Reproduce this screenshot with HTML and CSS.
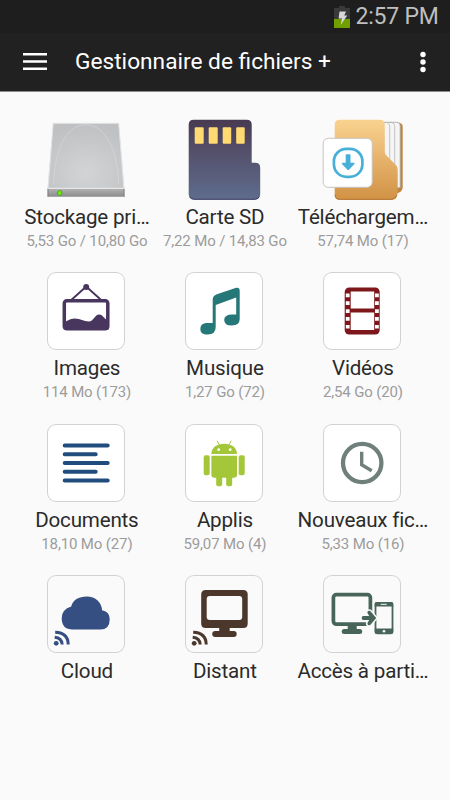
FILE: index.html
```html
<!DOCTYPE html>
<html lang="fr">
<head>
<meta charset="utf-8">
<title>Gestionnaire de fichiers +</title>
<link rel="stylesheet" href="styles.css">
</head>
<body>
<div class="status">
  <svg class="battery" width="16" height="22" viewBox="334 6 16 22"><path fill="#393939" d="M334 8h5V6h6v2h5v11h-16z"/><path fill="#719f00" d="M334 19h16v9h-16z"/><path fill="#d8d8d8" d="M339.500 11.500h6.500l-1.700 4h2.900l-6.500 9.500 1.300-6.500h-3.400z"/></svg>
  <span class="clock">2:57 PM</span>
</div>
<header class="bar">
  <svg class="menu" width="24" height="17" viewBox="0 0 24 17"><path fill="#fff" d="M0 0h24v2.500H0zM0 7.200h24v2.500H0zM0 14.400h24v2.500H0z"/></svg>
  <h1 class="heading">Gestionnaire de fichiers +</h1>
  <svg class="more" width="6" height="22" viewBox="0 0 6 22"><g fill="#fff"><circle cx="3" cy="3.500" r="2.700"/><circle cx="3" cy="11" r="2.700"/><circle cx="3" cy="18.500" r="2.700"/></g></svg>
</header>
<main class="grid">
  <section class="tile">
    <svg class="icon" viewBox="47.300 121.200 78 78">
      <defs><radialGradient id="disk" cx=".5" cy=".75" r=".75"><stop offset="0" stop-color="#d2d4d5"/><stop offset="1" stop-color="#bec0c2"/></radialGradient><linearGradient id="edge" x2="0" y2="1"><stop offset="0" stop-color="#b4b4b4"/><stop offset="1" stop-color="#8b8b8b"/></linearGradient></defs>
      <path fill="url(#disk)" d="M53.500 123.500h65.500l5.500 65H48z"/>
      <path fill="none" stroke="#e4e4e4" d="M48.300 188.500L53.500 123.500h65.500l5.200 65"/>
      <path fill="none" stroke="#d6d7d8" stroke-width=".7" d="M54 184C55 149 67 125 86 125s32 24 33 59"/>
      <path fill="url(#edge)" d="M48 188.500h76.700v8.500H48z"/><path fill="#e6e6e6" d="M48 188h76.700v1.200H48z"/><path stroke="#818181" d="M48.300 189v8M124.300 189v8"/><circle cx="60" cy="193.200" r="2.400" fill="#6bea16" stroke="#4b9d1a" stroke-width=".8"/>
    </svg>
    <h2 class="name">Stockage pri…</h2><p class="info">5,53 Go / 10,80 Go</p>
  </section>
  <section class="tile">
    <svg class="icon" viewBox="185.300 121.200 78 78">
      <defs><linearGradient id="sd" x2="0" y2="1"><stop offset="0" stop-color="#483a51"/><stop offset=".4" stop-color="#54506b"/><stop offset="1" stop-color="#5e6c8c"/></linearGradient></defs>
      <path fill="url(#sd)" d="M194 120h53q5 0 5 5v38h3.500q5 0 5 5v26q0 5.500-5 5.500H194q-5 0-5-5.500v-69q0-5 5-5z"/>
      <path fill="none" stroke="#32345a" d="M190 197q1.500 2.500 4 2.500h61.500q2.500 0 4-2.500"/>
      <g fill="#ffda72"><rect x="195" y="127.500" width="9" height="16.500" rx="1"/><rect x="209" y="127.500" width="9" height="16.500" rx="1"/><rect x="223" y="127.500" width="8.500" height="16.500" rx="1"/><rect x="236.500" y="127.500" width="8.500" height="16.500" rx="1"/></g>
    </svg>
    <h2 class="name">Carte SD</h2><p class="info">7,22 Mo / 14,83 Go</p>
  </section>
  <section class="tile">
    <svg class="icon" viewBox="323.300 121.200 78 78">
      <defs><linearGradient id="folder" x2="0" y2="1"><stop offset="0" stop-color="#fad290"/><stop offset="1" stop-color="#d19245"/></linearGradient></defs>
      <path fill="#c0843c" d="M388 123h12q3 1 3 4v60q0 4-4 6l-7 2z"/>
      <path fill="#f5f5f5" stroke="#a8a8a8" stroke-width=".8" d="M384 122.500h13q3.500 0 3.500 3.500v62h-16z"/>
      <path fill="none" stroke="#b4b4b4" stroke-width=".8" d="M385 122.500q5 0 5 4v33M390 122.500q5 0 5 4v38"/>
      <path fill="url(#folder)" d="M340 120h40q5 0 5 5v27q0 2 2 4l9 9q2 2 2 5v22q0 8-6 8h-52q-5 0-5-5v-70q0-5 5-5z"/>
      <path fill="none" stroke="#b5742d" d="M335.500 195q0 4.500 4.500 4.500h52q4 0 5-4"/>
      <rect x="323.500" y="138.500" width="49" height="49" rx="5" fill="#fff" stroke="#c8c4bd"/>
      <rect x="334.200" y="149" width="28.500" height="28" rx="12.500" fill="none" stroke="#46b0d8" stroke-width="2.700"/>
      <path fill="#46b0d8" d="M346 155.500q0-1 1-1h2.800q1 0 1 1v7.500h3.700q1 .5 0 1.500l-5 5.200q-1 1-2 0l-5-5.200q-1-1 0-1.500h3.500z"/>
    </svg>
    <h2 class="name">Téléchargem…</h2><p class="info">57,74 Mo (17)</p>
  </section>
  <section class="tile">
    <svg class="icon card" viewBox="47.300 272.500 78 78">
      <path fill="none" stroke="#49365e" stroke-width="2" d="M71 301l15.500-14L102 301"/><circle cx="86.500" cy="287.500" r="3" fill="#49365e"/>
      <rect x="64.600" y="301.200" width="43.500" height="28" rx="2.500" fill="none" stroke="#49365e" stroke-width="3.500"/>
      <path fill="#49365e" d="M64 323c3-1 6-4 11-4 6 0 9 3 14 3s6-7 10.500-7c4 0 5 5 9.500 6v9H64z"/>
    </svg>
    <h2 class="name">Images</h2><p class="info">114 Mo (173)</p>
  </section>
  <section class="tile">
    <svg class="icon card" viewBox="185.300 272.500 78 78">
      <path fill="#267878" d="M213 323.500V300q0-3.500 3.500-5l20-6.700q3.500-.5 3.500 3V319.500q0 6.500-8 6.500-7.500 0-7.500-5.500t8-5.500h4V298l-20.500 7.500V327.500q0 7.500-8 7.500c-5 0-7.300-1.500-7.300-5.500 0-4.500 3-6 7.500-6z"/>
    </svg>
    <h2 class="name">Musique</h2><p class="info">1,27 Go (72)</p>
  </section>
  <section class="tile">
    <svg class="icon card" viewBox="323.300 272.500 78 78">
      <rect x="345" y="288" width="35" height="47" rx="4.500" fill="#7d171b"/>
      <path fill="#fff" d="M351 292h23.500v17H351zM351 313h23.500v17.500H351z"/>
      <path stroke="#fff" stroke-width="3.800" stroke-dasharray="3.700 4.150" d="M348 294v38M377.200 294v38"/>
    </svg>
    <h2 class="name">Vidéos</h2><p class="info">2,54 Go (20)</p>
  </section>
  <section class="tile">
    <svg class="icon card" viewBox="47.300 423.800 78 78"><path stroke="#204d7e" stroke-width="4" stroke-linecap="round" d="M65 445.200h43M65 454h31M65 462.800h43M65 471.500h31M65 480.200h43"/></svg>
    <h2 class="name">Documents</h2><p class="info">18,10 Mo (27)</p>
  </section>
  <section class="tile">
    <svg class="icon card" viewBox="185.300 423.800 78 78">
      <g fill="#a4c639"><path d="M211.700 453.700c0-6 5-10.200 12.800-10.200s12.800 4.200 12.800 10.200zM211.700 455.500h25.600v19q0 3-3 3h-19.600q-3 0-3-3z"/><rect x="204" y="455" width="6" height="20" rx="2"/><rect x="239" y="455" width="6" height="20" rx="2"/><rect x="216.500" y="473" width="6" height="13" rx="2"/><rect x="226.500" y="473" width="6" height="13" rx="2"/></g>
      <path stroke="#a4c639" stroke-width="1" d="M217.500 440.500l2 4M231.500 440.500l-2 4"/><circle cx="219" cy="449.500" r="1.400" fill="#fff"/><circle cx="230.500" cy="449.500" r="1.400" fill="#fff"/>
    </svg>
    <h2 class="name">Applis</h2><p class="info">59,07 Mo (4)</p>
  </section>
  <section class="tile">
    <svg class="icon card" viewBox="323.300 423.800 78 78"><circle cx="362.500" cy="462.800" r="19.200" fill="none" stroke="#6f807c" stroke-width="4.300"/><path fill="none" stroke="#6f807c" stroke-width="3.400" d="M362 451.500v13l10 6"/></svg>
    <h2 class="name">Nouveaux fic…</h2><p class="info">5,33 Mo (16)</p>
  </section>
  <section class="tile">
    <svg class="icon card clear" viewBox="47.300 575 78 78">
      <path fill="#364f82" d="M73 629.500q-11 0-11-11.500 0-8.500 9.500-11.500C73 600 79 596.500 87 596.500c9 0 15 6 15.500 14 5 .5 7.500 4 7.500 9q0 10-9.500 10z"/>
      <circle cx="56.500" cy="643.300" r="2.400" fill="#364f82"/><path fill="none" stroke="#364f82" stroke-width="3" d="M55 637.300q7 .5 7.500 7.200M55.500 632.200q13 .5 13 12.300"/>
    </svg>
    <h2 class="name">Cloud</h2>
  </section>
  <section class="tile">
    <svg class="icon card clear" viewBox="185.300 575 78 78">
      <path fill="#4b372b" fill-rule="evenodd" d="M206 590h37.500q4.500 0 4.500 4.500v29q0 4.500-4.500 4.500h-13.500v3h4q3 0 3 3t-3 3h-18.500q-3 0-3-3t3-3h4v-3H206q-4.500 0-4.500-4.500v-29q0-4.500 4.500-4.500zM210 596q-3 0-3 3v18q0 3 3 3h29.500q3 0 3-3v-18q0-3-3-3z"/>
      <circle cx="194.500" cy="643.300" r="2.400" fill="#4b372b"/><path fill="none" stroke="#4b372b" stroke-width="3" d="M193 637.300q7 .5 7.500 7.200M193.500 632.200q13 .5 13 12.300"/>
    </svg>
    <h2 class="name">Distant</h2>
  </section>
  <section class="tile">
    <svg class="icon card clear" viewBox="323.300 575 78 78">
      <rect x="333.700" y="594.700" width="37" height="29.500" rx="3" fill="none" stroke="#476659" stroke-width="3.700"/>
      <path fill="#476659" d="M348 626h9v3h3q2.500 0 2.500 2.500T360 634h-15.500q-2.500 0-2.500-2.500t2.500-2.500h3.500z"/>
      <rect x="375.800" y="602.800" width="17" height="30.500" rx="2" fill="#fafafa" stroke="#476659" stroke-width="1.800"/><path fill="#476659" d="M375 603.500q0-1.500 1.500-1.500h15.500q1.500 0 1.500 1.500v3H375zM375 628.500h18.500v3.500q0 2-2 2h-14.500q-2 0-2-2z"/><path stroke="#fafafa" stroke-width="1" d="M381 604.300h6"/><circle cx="384.300" cy="631.300" r="1.300" fill="#fafafa"/>
      <path fill="#476659" stroke="#fafafa" stroke-width="3" paint-order="stroke" d="M363.500 616h6l-1.500-2.500q-1-1.700.5-2.500t2.500.5l5.500 6.500-5.500 6.500q-1 1.300-2.500.5t-.5-2.500l1.500-2.500h-6q-1.500 0-1.500-2t1.500-2z"/>
    </svg>
    <h2 class="name">Accès à parti…</h2>
  </section>
</main>
</body>
</html>
```

FILE: styles.css
```css
* { box-sizing: border-box; }
body { margin: 0; height: 800px; overflow: hidden; background: #fafafa; font-family: Roboto, "Noto Sans", sans-serif; }
.status { height: 33px; background: #1e1e1e; display: flex; justify-content: flex-end; align-items: center; padding-right: 11.5px; gap: 6px; }
.battery { margin-top: 1px; }
.clock { color: #bfbfbf; font-size: 23px; line-height: 32px; letter-spacing: -.25px; }
.bar { height: 59px; background: #212121; border-bottom: 1px solid #8c8c8c; display: flex; align-items: center; padding: 0 24.500px 0 23px; }
.menu { margin-top: -1px; }
.heading { margin: 0 0 0 28px; flex: 1; color: #fff; font-size: 22.700px; line-height: 32px; font-weight: 400; white-space: nowrap; }
.grid { display: grid; grid-template-columns: repeat(3, 138px); grid-auto-rows: 151.200px; margin: 29.300px 0 0 17.900px; }
.tile { display: flex; flex-direction: column; align-items: center; }
.icon { width: 78px; height: 78px; flex: none; overflow: visible; margin-right: 1.200px; }
.card { background: #fff; border-radius: 9px; box-shadow: inset 0 0 0 1px #d2d2d2; }
.clear { background: #fafafa; }
.name { margin: 5px 0 0; color: #2b2b2b; font-size: 20.600px; letter-spacing: -.2px; line-height: 26px; font-weight: 400; white-space: nowrap; }
.info { margin: 1px 0 0; color: #9c9c9c; font-size: 15px; letter-spacing: -.14px; line-height: 20px; white-space: nowrap; }
```
